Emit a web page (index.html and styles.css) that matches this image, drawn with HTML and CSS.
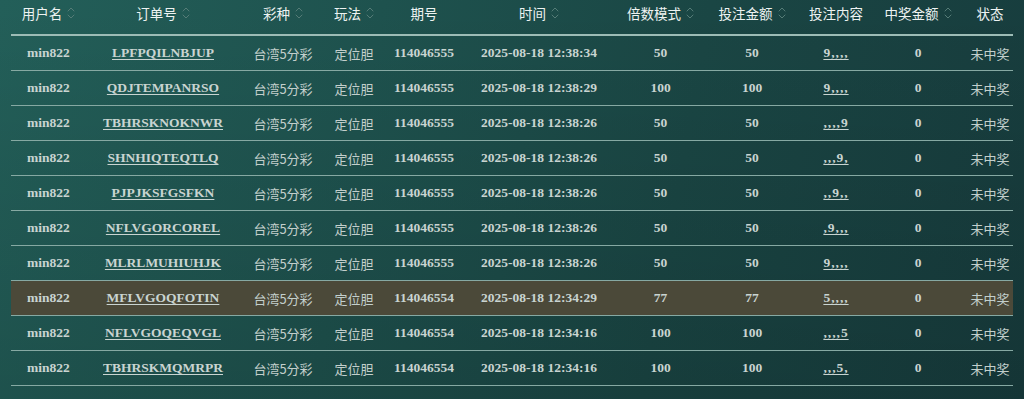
FILE: index.html
```html
<!DOCTYPE html>
<html lang="zh-CN">
<head>
<meta charset="utf-8">
<title>投注记录</title>
<link rel="stylesheet" href="styles.css">
</head>
<body>
<div class="page">
  <table class="bets">
    <colgroup>
      <col class="c-user"><col class="c-order"><col class="c-lottery"><col class="c-play"><col class="c-issue"><col class="c-time"><col class="c-mult"><col class="c-amount"><col class="c-content"><col class="c-win"><col class="c-status">
    </colgroup>
    <thead>
      <tr>
        <th><span class="th-in">用户名<svg class="sort" viewBox="0 0 8 18" width="8" height="18"><polyline points="1,7 4,4 7,7"/><polyline points="1,11 4,14 7,11"/></svg></span></th>
        <th><span class="th-in">订单号<svg class="sort" viewBox="0 0 8 18" width="8" height="18"><polyline points="1,7 4,4 7,7"/><polyline points="1,11 4,14 7,11"/></svg></span></th>
        <th><span class="th-in">彩种<svg class="sort" viewBox="0 0 8 18" width="8" height="18"><polyline points="1,7 4,4 7,7"/><polyline points="1,11 4,14 7,11"/></svg></span></th>
        <th><span class="th-in">玩法<svg class="sort" viewBox="0 0 8 18" width="8" height="18"><polyline points="1,7 4,4 7,7"/><polyline points="1,11 4,14 7,11"/></svg></span></th>
        <th><span class="th-in">期号</span></th>
        <th><span class="th-in">时间<svg class="sort" viewBox="0 0 8 18" width="8" height="18"><polyline points="1,7 4,4 7,7"/><polyline points="1,11 4,14 7,11"/></svg></span></th>
        <th><span class="th-in">倍数模式<svg class="sort" viewBox="0 0 8 18" width="8" height="18"><polyline points="1,7 4,4 7,7"/><polyline points="1,11 4,14 7,11"/></svg></span></th>
        <th><span class="th-in">投注金额<svg class="sort" viewBox="0 0 8 18" width="8" height="18"><polyline points="1,7 4,4 7,7"/><polyline points="1,11 4,14 7,11"/></svg></span></th>
        <th><span class="th-in">投注内容</span></th>
        <th><span class="th-in">中奖金额<svg class="sort" viewBox="0 0 8 18" width="8" height="18"><polyline points="1,7 4,4 7,7"/><polyline points="1,11 4,14 7,11"/></svg></span></th>
        <th class="status"><span class="th-in">状态</span></th>
      </tr>
    </thead>
    <tbody>
      <tr><td class="num">min822</td><td class="num"><a class="link">LPFPQILNBJUP</a></td><td class="cn">台湾5分彩</td><td class="cn">定位胆</td><td class="num">114046555</td><td class="num">2025-08-18 12:38:34</td><td class="num">50</td><td class="num">50</td><td class="num"><a class="link bet">9,,,,</a></td><td class="num">0</td><td class="cn status">未中奖</td></tr>
      <tr><td class="num">min822</td><td class="num"><a class="link">QDJTEMPANRSO</a></td><td class="cn">台湾5分彩</td><td class="cn">定位胆</td><td class="num">114046555</td><td class="num">2025-08-18 12:38:29</td><td class="num">100</td><td class="num">100</td><td class="num"><a class="link bet">9,,,,</a></td><td class="num">0</td><td class="cn status">未中奖</td></tr>
      <tr><td class="num">min822</td><td class="num"><a class="link">TBHRSKNOKNWR</a></td><td class="cn">台湾5分彩</td><td class="cn">定位胆</td><td class="num">114046555</td><td class="num">2025-08-18 12:38:26</td><td class="num">50</td><td class="num">50</td><td class="num"><a class="link bet">,,,,9</a></td><td class="num">0</td><td class="cn status">未中奖</td></tr>
      <tr><td class="num">min822</td><td class="num"><a class="link">SHNHIQTEQTLQ</a></td><td class="cn">台湾5分彩</td><td class="cn">定位胆</td><td class="num">114046555</td><td class="num">2025-08-18 12:38:26</td><td class="num">50</td><td class="num">50</td><td class="num"><a class="link bet">,,,9,</a></td><td class="num">0</td><td class="cn status">未中奖</td></tr>
      <tr><td class="num">min822</td><td class="num"><a class="link">PJPJKSFGSFKN</a></td><td class="cn">台湾5分彩</td><td class="cn">定位胆</td><td class="num">114046555</td><td class="num">2025-08-18 12:38:26</td><td class="num">50</td><td class="num">50</td><td class="num"><a class="link bet">,,9,,</a></td><td class="num">0</td><td class="cn status">未中奖</td></tr>
      <tr><td class="num">min822</td><td class="num"><a class="link">NFLVGORCOREL</a></td><td class="cn">台湾5分彩</td><td class="cn">定位胆</td><td class="num">114046555</td><td class="num">2025-08-18 12:38:26</td><td class="num">50</td><td class="num">50</td><td class="num"><a class="link bet">,9,,,</a></td><td class="num">0</td><td class="cn status">未中奖</td></tr>
      <tr><td class="num">min822</td><td class="num"><a class="link">MLRLMUHIUHJK</a></td><td class="cn">台湾5分彩</td><td class="cn">定位胆</td><td class="num">114046555</td><td class="num">2025-08-18 12:38:26</td><td class="num">50</td><td class="num">50</td><td class="num"><a class="link bet">9,,,,</a></td><td class="num">0</td><td class="cn status">未中奖</td></tr>
      <tr class="hl"><td class="num">min822</td><td class="num"><a class="link">MFLVGOQFOTIN</a></td><td class="cn">台湾5分彩</td><td class="cn">定位胆</td><td class="num">114046554</td><td class="num">2025-08-18 12:34:29</td><td class="num">77</td><td class="num">77</td><td class="num"><a class="link bet">5,,,,</a></td><td class="num">0</td><td class="cn status">未中奖</td></tr>
      <tr><td class="num">min822</td><td class="num"><a class="link">NFLVGOQEQVGL</a></td><td class="cn">台湾5分彩</td><td class="cn">定位胆</td><td class="num">114046554</td><td class="num">2025-08-18 12:34:16</td><td class="num">100</td><td class="num">100</td><td class="num"><a class="link bet">,,,,5</a></td><td class="num">0</td><td class="cn status">未中奖</td></tr>
      <tr><td class="num">min822</td><td class="num"><a class="link">TBHRSKMQMRPR</a></td><td class="cn">台湾5分彩</td><td class="cn">定位胆</td><td class="num">114046554</td><td class="num">2025-08-18 12:34:16</td><td class="num">100</td><td class="num">100</td><td class="num"><a class="link bet">,,,5,</a></td><td class="num">0</td><td class="cn status">未中奖</td></tr>
    </tbody>
  </table>
</div>
</body>
</html>
```

FILE: styles.css
```css
html, body {
  margin: 0;
  padding: 0;
  height: 100%;
}
body {
  background:
    linear-gradient(180deg, rgba(0,0,0,0) 0%, rgba(0,0,0,0.12) 100%),
    linear-gradient(100deg, #235f59 0%, #1e524e 35%, #1a4644 65%, #173c3d 100%);
  overflow: hidden;
}
.page {
  padding: 0 11px;
}
.bets {
  width: 1002px;
  border-collapse: collapse;
  table-layout: fixed;
}
.c-user { width: 75px; }
.c-order { width: 154px; }
.c-lottery { width: 86px; }
.c-play { width: 56px; }
.c-issue { width: 84px; }
.c-time { width: 146px; }
.c-mult { width: 97px; }
.c-amount { width: 86px; }
.c-content { width: 82px; }
.c-win { width: 82px; }
.c-status { width: 54px; }

.bets th {
  height: 34px;
  padding: 0;
  border-bottom: 2px solid #9dbcb6;
  font-family: "Noto Sans CJK SC", "Noto Sans", sans-serif;
  font-size: 13.5px;
  font-weight: 400;
  color: #eef3f2;
  text-align: center;
  vertical-align: middle;
}
.th-in {
  display: inline-flex;
  align-items: center;
  gap: 5px;
  position: relative;
  top: -4px;
}
.sort {
  fill: none;
  stroke: #557c77;
  stroke-width: 1;
  stroke-linecap: round;
  stroke-linejoin: round;
}
.bets td {
  height: 34px;
  padding: 0;
  border-bottom: 1px solid #86a9a3;
  text-align: center;
  vertical-align: middle;
  white-space: nowrap;
}
.bets .status {
  padding-left: 8px;
}
.num {
  font-family: "Liberation Serif", "DejaVu Serif", serif;
  font-weight: 700;
  font-size: 13.5px;
  color: #c9d4d1;
}
.cn {
  font-family: "Noto Sans CJK SC", "Noto Sans", sans-serif;
  font-size: 13px;
  color: #c3cfcc;
}
.link {
  color: #c9d4d1;
  text-decoration: underline;
  text-underline-offset: 2px;
  text-decoration-thickness: 1px;
}
.bet {
  letter-spacing: 1px;
}
.hl td {
  background-color: #4b4939;
}
```
